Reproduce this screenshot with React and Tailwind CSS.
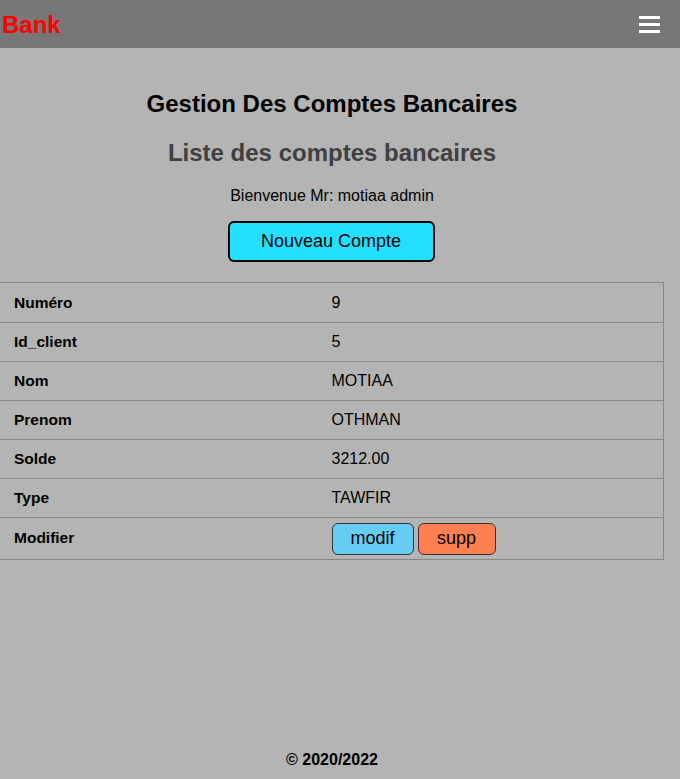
import React from 'react';

export default function App() {
  const compte = [
    ['Numéro', '9'],
    ['Id_client', '5'],
    ['Nom', 'MOTIAA'],
    ['Prenom', 'OTHMAN'],
    ['Solde', '3212.00'],
    ['Type', 'TAWFIR'],
  ];

  return (
    <div className="min-h-[779px] bg-[#b4b4b4] flex flex-col font-['Liberation_Sans',Arial,sans-serif] text-black">
      {/* barre du haut */}
      <header className="h-[48px] bg-[#777777] flex items-center justify-between pl-[2px] pr-[20px]">
        <span className="text-[24px] font-bold text-[#ff0000] mt-[1px]">Bank</span>
        <div className="flex flex-col gap-[4px] w-[21px]">
          <div className="h-[3px] bg-white" />
          <div className="h-[3px] bg-white" />
          <div className="h-[3px] bg-white" />
        </div>
      </header>

      <main className="flex-1 w-[664px] flex flex-col items-center pt-[42px]">
        <h1 className="text-[24px] font-bold leading-[28px]">Gestion Des Comptes Bancaires</h1>
        <h2 className="text-[24px] font-bold leading-[28px] text-[#404040] mt-[21px]">Liste des comptes bancaires</h2>
        <p className="text-[16px] leading-[18px] mt-[20px]">Bienvenue Mr: motiaa admin</p>
        <button className="mt-[16px] w-[207px] h-[41px] bg-[#22e0ff] border-2 border-black rounded-[6px] text-[18px] -translate-x-[1px]">
          Nouveau Compte
        </button>

        {/* tableau du compte */}
        <div className="self-start mt-[20px] w-[664px] border border-l-0 border-[#888888] text-[16px]">
          {compte.map(([label, value], i) => (
            <div
              key={label}
              className={`grid grid-cols-2 h-[39px] items-center ${i > 0 ? 'border-t border-[#888888]' : ''}`}
            >
              <span className="pl-[14px] font-bold text-[15.5px]">{label}</span>
              <span>{value}</span>
            </div>
          ))}
          <div className="grid grid-cols-2 h-[42px] items-center border-t border-[#888888]">
            <span className="pl-[14px] font-bold text-[15.5px] -mt-[2px]">Modifier</span>
            <div className="flex gap-[4px]">
              <button className="w-[82px] h-[32px] bg-[#66ccf2] border border-[#333333] rounded-[6px] text-[18px]">modif</button>
              <button className="w-[78px] h-[32px] bg-[#ff7f50] border border-[#333333] rounded-[6px] text-[18px]">supp</button>
            </div>
          </div>
        </div>
      </main>

      <footer className="w-[664px] text-center font-bold text-[16px] pb-[7px]">© 2020/2022</footer>
    </div>
  );
}
